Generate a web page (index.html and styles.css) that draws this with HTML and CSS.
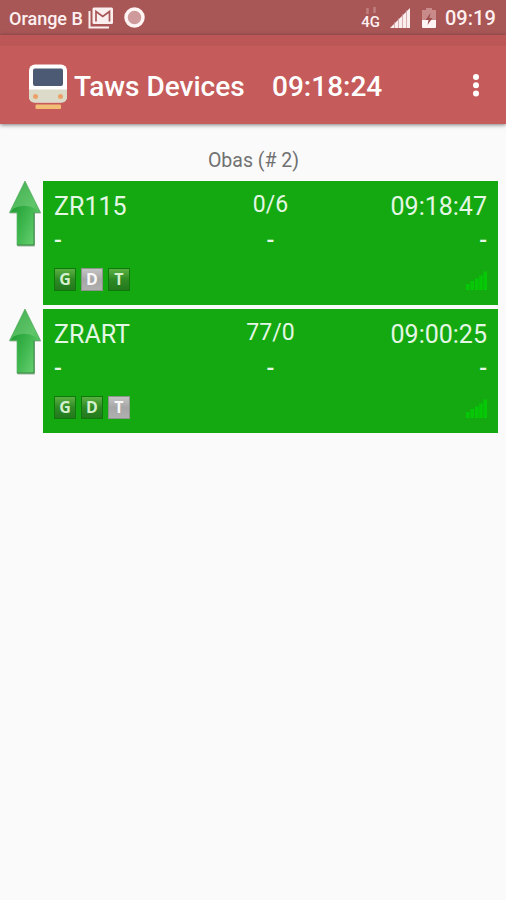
FILE: index.html
```html
<!DOCTYPE html>
<html lang="en">
<head>
    <meta charset="UTF-8">
    <meta name="viewport" content="width=device-width, initial-scale=1.0">
    <title>Taws Devices</title>
    <link rel="stylesheet" href="styles.css">
</head>
<body>
<svg class="defs" width="0" height="0">
    <defs>
        <linearGradient id="head" x1="0" y1="0" x2="0.6" y2="1">
            <stop offset="0" stop-color="#3fae4e"/>
            <stop offset="0.6" stop-color="#5fc569"/>
            <stop offset="1" stop-color="#43b951"/>
        </linearGradient>
        <linearGradient id="stem" x1="0" y1="0" x2="1" y2="0.6">
            <stop offset="0" stop-color="#1f9c31"/>
            <stop offset="0.5" stop-color="#3bb44b"/>
            <stop offset="1" stop-color="#62cc6c"/>
        </linearGradient>
        <symbol id="arrow" viewBox="0 0 34 68">
            <path d="M17 2L33 33.500H27V66.500H9.500V33.500H1.500Z" fill="#6d8f70" opacity="0.6"/>
            <path d="M17 1L32.500 32.500H26V65H9V32.500H1.500Z" fill="url(#head)" stroke="#4aa455" stroke-width="0.600"/>
            <path d="M5.500 28.500Q16 23 28 29L30.500 32H25.600V64.500H9.400V32H2.500Z" fill="url(#stem)"/>
            <path d="M9 65H26V32.500" fill="none" stroke="#3c8a46" stroke-width="0.900"/>
        </symbol>
        <symbol id="signal" viewBox="0 0 22 20">
            <path d="M0 13h3.600v6H0zM4.500 10h3.600v9H4.500zM9 7.500h3.600V19H9zM13.200 4.500h3.600V19h-3.600zM17.400 0.500H21V19h-3.600z" fill="#06c806"/>
        </symbol>
    </defs>
</svg>

<div class="status-bar">
    <span class="carrier">Orange B</span>
    <svg class="mail" width="26" height="22" viewBox="0 0 26 22">
        <path d="M1.500 4V20.500H21" fill="none" stroke="#fbeeee" stroke-width="2"/>
        <rect x="4.500" y="0.500" width="20.500" height="16.500" rx="1.500" fill="#fbeeee"/>
        <path d="M8 14.500V4.500L14.750 9.500L21.500 4.500V14.500" fill="none" stroke="#a85656" stroke-width="1.700"/>
    </svg>
    <svg class="record" width="22" height="22" viewBox="0 0 22 22">
        <circle cx="10.500" cy="10.500" r="8.500" fill="#cf9a9c" stroke="#fff3f3" stroke-width="3.500"/>
    </svg>
    <div class="network">
        <svg width="12" height="8" viewBox="0 0 12 8">
            <path d="M2.500 1V7M9.500 0V6" stroke="#c07e7f" stroke-width="2.500"/>
        </svg>
        <span>4G</span>
    </div>
    <svg class="bars" width="20" height="20" viewBox="0 0 20 20">
        <path d="M0 20L20 0V20Z" fill="#fbeeee"/>
        <path d="M4.500 14V20M8.500 10V20M12.500 6V20M16.500 2V20" stroke="#c99292" stroke-width="0.700"/>
    </svg>
    <svg class="battery" width="14" height="20" viewBox="0 0 14 20">
        <path d="M4 0H10V2H14V12H0V2H4Z" fill="#c98a8a"/>
        <path d="M0 12H14V19Q14 20 13 20H1Q0 20 0 19Z" fill="#fff4f4"/>
        <path d="M8.500 5L3.500 12H6.500L5.500 17L10.500 10H7.500Z" fill="#a04f50"/>
    </svg>
    <span class="clock">09:19</span>
</div>

<div class="app-bar">
    <svg class="logo" width="40" height="46" viewBox="0 0 40 46">
        <rect x="1" y="0.500" width="38" height="38" rx="6" fill="#fff"/>
        <path d="M1 25.500H39V32.500Q39 38.500 33 38.500H7Q1 38.500 1 32.500Z" fill="#dcdac8"/>
        <rect x="5" y="4.500" width="30" height="17.500" rx="2" fill="#4c5a73"/>
        <circle cx="7.500" cy="32.500" r="2.500" fill="#eba268"/>
        <circle cx="32.500" cy="32.500" r="2.500" fill="#eba268"/>
        <rect x="7.500" y="40.500" width="25.500" height="4.500" rx="1" fill="#f4bd76"/>
    </svg>
    <h1>Taws Devices</h1>
    <span class="time">09:18:24</span>
    <svg class="menu" width="8" height="28" viewBox="0 0 8 28">
        <circle cx="4" cy="4" r="3" fill="#fff"/>
        <circle cx="4" cy="12.300" r="3" fill="#fff"/>
        <circle cx="4" cy="20.600" r="3" fill="#fff"/>
    </svg>
</div>

<h2>Obas (# 2)</h2>

<div class="device">
    <svg class="arrow"><use href="#arrow"/></svg>
    <div class="card">
        <div class="row">
            <span>ZR115</span>
            <span class="count">0/6</span>
            <span>09:18:47</span>
        </div>
        <div class="row dashes">
            <span>-</span>
            <span>-</span>
            <span>-</span>
        </div>
        <div class="footer">
            <span class="badge">G</span>
            <span class="badge off">D</span>
            <span class="badge">T</span>
            <svg class="signal"><use href="#signal"/></svg>
        </div>
    </div>
</div>

<div class="device">
    <svg class="arrow"><use href="#arrow"/></svg>
    <div class="card">
        <div class="row">
            <span>ZRART</span>
            <span class="count">77/0</span>
            <span>09:00:25</span>
        </div>
        <div class="row dashes">
            <span>-</span>
            <span>-</span>
            <span>-</span>
        </div>
        <div class="footer">
            <span class="badge">G</span>
            <span class="badge">D</span>
            <span class="badge off">T</span>
            <svg class="signal"><use href="#signal"/></svg>
        </div>
    </div>
</div>
</body>
</html>
```

FILE: styles.css
```css
* {
    margin: 0;
    padding: 0;
    font-family: Roboto, sans-serif;
    box-sizing: border-box;
}
body {
    background: #fafafa;
    color: #fff;
}
svg {
    display: block;
    flex-shrink: 0;
}
.defs {
    height: 0;
}

.status-bar {
    height: 35px;
    background: #a85656;
    display: flex;
    align-items: center;
    padding: 0 10px 0 9px;
    color: #fff0f0;
}
.carrier {
    font-size: 18px;
    font-weight: 500;
    width: 79px;
    white-space: nowrap;
    padding-top: 2px;
}
.mail {
    margin-right: 10px;
}
.network {
    margin-left: auto;
    display: flex;
    flex-direction: column;
    align-items: center;
    padding-top: 2px;
}
.network span {
    font-size: 15px;
    font-weight: 500;
    line-height: 15px;
}
.bars {
    margin: 0 12px 0 10px;
}
.clock {
    font-size: 20px;
    font-weight: 500;
    margin-left: 9px;
    width: 51px;
    padding-top: 1px;
}

.app-bar {
    height: 89px;
    background: linear-gradient(#bd5757 11px, #c65b5b 11px);
    box-shadow: 0 1px 4px rgba(0, 0, 0, 0.5);
    display: flex;
    align-items: center;
    padding: 14px 26px 0 28px;
}
.logo {
    margin-right: 6px;
}
.app-bar h1 {
    font-size: 28px;
    font-weight: 500;
    width: 198px;
    white-space: nowrap;
}
.time {
    font-size: 28px;
    font-weight: 500;
}
.menu {
    margin-left: auto;
}

h2 {
    height: 57px;
    padding: 25px 0 0 1px;
    text-align: center;
    font-size: 19.5px;
    line-height: 24px;
    font-weight: 400;
    color: #717171;
}

.device {
    display: flex;
    padding: 0 8px 0 8px;
    margin-bottom: 4px;
}
.arrow {
    width: 34px;
    height: 68px;
    margin-right: 1px;
    margin-top: -1px;
}
.card {
    flex: 1;
    height: 124px;
    background: #14a911;
    padding: 8px 11px 0;
    color: #e4f7e4;
}
.row {
    display: grid;
    grid-template-columns: 1fr 1fr 1fr;
    height: 35px;
    font-size: 25px;
    line-height: 35px;
}
.row span:nth-child(2) {
    text-align: center;
}
.row span:nth-child(3) {
    text-align: right;
}
.row .count {
    font-size: 23px;
    line-height: 31px;
}
.dashes {
    font-size: 23px;
    font-weight: 500;
    line-height: 33px;
}
.footer {
    display: flex;
    align-items: center;
    gap: 5px;
    padding-top: 9px;
}
.badge {
    width: 22px;
    height: 23px;
    border: 1px solid #0e780c;
    background: linear-gradient(#5cb043, #2f8a25 50%, #23781c);
    color: #d5f0ce;
    font-family: "Open Sans", sans-serif;
    font-size: 16px;
    font-weight: 700;
    line-height: 21px;
    text-align: center;
}
.badge.off {
    border-color: #8c948c;
    background: linear-gradient(#c4c4c4, #a6a6a6 50%, #b0b0b0);
    color: #f8f8f8;
}
.signal {
    width: 22px;
    height: 20px;
    margin-left: auto;
    margin-top: 3px;
    margin-right: -1px;
}
```
